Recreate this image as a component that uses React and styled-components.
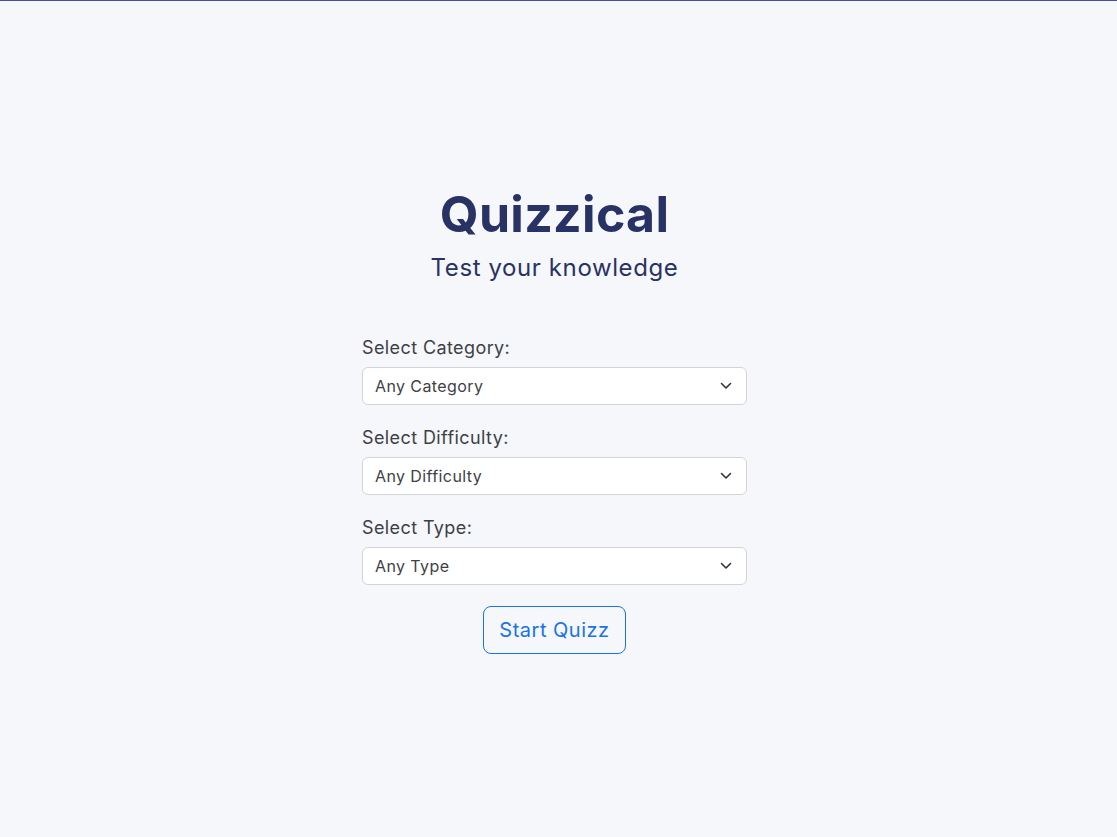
import React from 'react'
import styled, { createGlobalStyle } from 'styled-components'

const GlobalStyle = createGlobalStyle`
    * { box-sizing: border-box; }
    body {
        margin: 0;
        background: #F5F7FB;
        font-family: Inter, "Open Sans", sans-serif;
    }
`

const Page = styled.main`
    min-height: 100vh;
    border-top: 1px solid #4D4BA8;
    display: flex;
    flex-direction: column;
    align-items: center;
    justify-content: center;
    padding: 0 8px 1px 0;
`

const Title = styled.h1`
    margin: 0;
    font-size: 50px;
    font-weight: 700;
    letter-spacing: 0.3px;
    color: #293264;
    line-height: 1.2;
`

const Subtitle = styled.p`
    margin: 9px 0 55px;
    font-size: 24px;
    letter-spacing: 0.6px;
    font-weight: 400;
    color: #293264;
`

const Form = styled.form`
    width: 385px;
    display: flex;
    flex-direction: column;
`

const Field = styled.div`
    display: flex;
    flex-direction: column;
    margin-bottom: 22px;
`

const Label = styled.label`
    font-size: 18px;
    letter-spacing: 0.4px;
    color: #3f3f46;
    margin-bottom: 9px;
`

const SelectWrap = styled.div`
    position: relative;
`

const Select = styled.select`
    width: 100%;
    height: 38px;
    appearance: none;
    background: #fff;
    border: 1px solid #d4d4d8;
    border-radius: 6px;
    padding: 0 36px 0 12px;
    font-family: inherit;
    font-size: 16px;
    letter-spacing: 0.4px;
    color: #3f3f46;
    outline: none;
`

const Chevron = styled.svg`
    position: absolute;
    right: 15px;
    top: 50%;
    transform: translateY(-50%);
    pointer-events: none;
`

const Button = styled.button`
    align-self: center;
    width: 143px;
    height: 48px;
    margin-top: -1px;
    background: transparent;
    border: 1px solid #1a73e8;
    border-radius: 8px;
    color: #1a73e8;
    font-family: inherit;
    font-size: 20px;
    letter-spacing: 0.5px;
    cursor: pointer;
`

const fields = [
    { id: 'category', label: 'Select Category:', option: 'Any Category' },
    { id: 'difficulty', label: 'Select Difficulty:', option: 'Any Difficulty' },
    { id: 'type', label: 'Select Type:', option: 'Any Type' },
]

const App = () => {
    return (
        <>
            <GlobalStyle />
            <Page>
                <Title>Quizzical</Title>
                <Subtitle>Test your knowledge</Subtitle>
                <Form onSubmit={e => e.preventDefault()}>
                    {fields.map(f => (
                        <Field key={f.id}>
                            <Label htmlFor={f.id}>{f.label}</Label>
                            <SelectWrap>
                                <Select id={f.id} defaultValue="">
                                    <option value="">{f.option}</option>
                                </Select>
                                <Chevron width="12" height="8" viewBox="0 0 12 8" fill="none">
                                    <path d="M1.5 1.5 L6 6 L10.5 1.5" stroke="#333" strokeWidth="1.6" strokeLinecap="round" strokeLinejoin="round" />
                                </Chevron>
                            </SelectWrap>
                        </Field>
                    ))}
                    <Button type="submit">Start Quizz</Button>
                </Form>
            </Page>
        </>
    )
}

export default App
